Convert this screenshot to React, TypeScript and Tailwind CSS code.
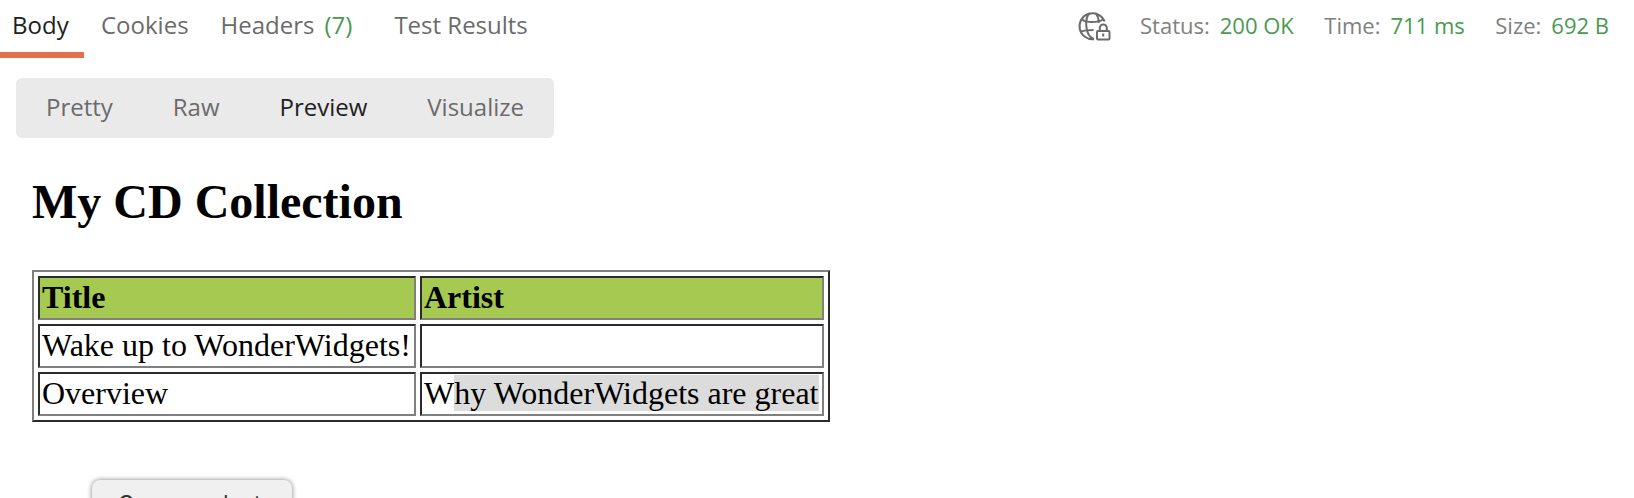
import React from "react";

const cell = "border-2 border-t-[#2b2b2b] border-l-[#2b2b2b] border-r-[#808080] border-b-[#808080] px-[2px] pb-[2px] h-[44px] flex items-center whitespace-nowrap";

function GlobeLock() {
  return (
    <svg width="33" height="32" viewBox="0 0 33 32" fill="none" stroke="#6b6b6b" strokeWidth="2" className="mt-[1px] shrink-0 overflow-visible">
      <path d="M17 29.200A13 13 0 1 1 27.600 11.500" />
      <path d="M16.500 29C7.500 25 7.500 7 13 3.200M18.500 3.200C21 6 21.800 9 21.600 13" />
      <path d="M5 9.500Q8 12 15 12T26 9.500M4 21.500Q8 20 16.500 20" />
      <rect x="20" y="21" width="12.500" height="8.500" rx="1" />
      <path d="M22.800 21v-3a3.500 3.500 0 0 1 7 0V21M26.200 23.500v3" />
    </svg>
  );
}

function Stat({ label, value }: { label: string; value: string }) {
  return (
    <div className="flex gap-[10px] whitespace-nowrap">
      <span className="text-[#808080]">{label}</span>
      <span className="text-[#4a9950]">{value}</span>
    </div>
  );
}

export default function App() {
  return (
    <div className="relative h-[498px] w-[1634px] overflow-hidden bg-white font-['Open_Sans',sans-serif] text-[24px] leading-[32px] text-[#6b6b6b]">
      <div className="flex h-[58px] justify-between">
        <div className="flex items-start">
          <div className="h-[58px] w-[84px] border-b-[6px] border-[#e27049] pt-[9px] pl-[12px] text-[#212121]">Body</div>
          <div className="ml-[17px] pt-[9px]">Cookies</div>
          <div className="ml-[32px] flex gap-[10px] pt-[9px]">Headers <span className="text-[#4a9950]">(7)</span></div>
          <div className="ml-[42px] pt-[9px] whitespace-nowrap">Test Results</div>
        </div>
        <div className="flex items-start gap-[30.5px] pt-[9px] pr-[25px] text-[22px]">
          <GlobeLock />
          <Stat label="Status:" value="200 OK" />
          <Stat label="Time:" value="711 ms" />
          <Stat label="Size:" value="692 B" />
        </div>
      </div>
      <div className="mt-[20px] ml-[16px] flex h-[60px] w-[538px] items-center justify-between rounded-[6px] bg-[#eaeaea] px-[30px] pb-[2px]">
        <span>Pretty</span>
        <span>Raw</span>
        <span className="text-[#212121]">Preview</span>
        <span>Visualize</span>
      </div>
      <div className="ml-[32px] pt-[37px] font-['Liberation_Serif',serif] text-[32px] leading-[36px] text-black">
        <h2 className="text-[48px] leading-[54px] font-bold">My CD Collection</h2>
        <div className="mt-[41px] grid w-[798px] grid-cols-[378px_404px] gap-[4px] border-2 border-t-[#808080] border-l-[#808080] border-r-[#2b2b2b] border-b-[#2b2b2b] p-[4px]">
          <div className={cell + " bg-[#a5c951] font-bold"}>Title</div>
          <div className={cell + " bg-[#a5c951] font-bold"}>Artist</div>
          <div className={cell}>Wake up to WonderWidgets!</div>
          <div className={cell} />
          <div className={cell}>Overview</div>
          <div className={cell}>W<span className="bg-[#dcdcdc]">hy WonderWidgets are great</span></div>
        </div>
      </div>
      <div className="absolute top-[480px] left-[92px] h-[50px] w-[200px] rounded-[8px] bg-[#f0f0f0] pt-[7px] pl-[26px] font-[Inter,sans-serif] text-[22px] leading-[32px] text-[#333] shadow-[0_0_5px_rgba(0,0,0,0.5)]">Open product</div>
    </div>
  );
}
